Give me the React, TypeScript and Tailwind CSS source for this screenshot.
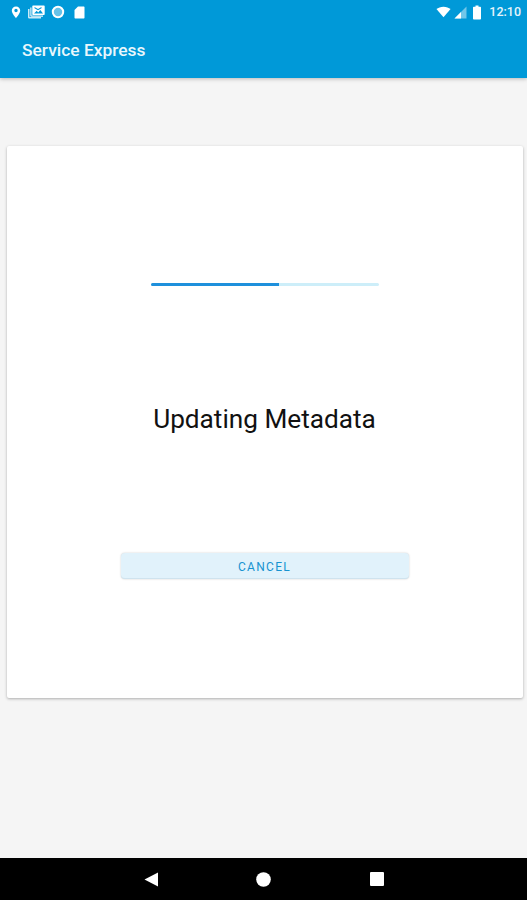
export default function App() {
  return (
    <div className="w-[527px] h-[900px] flex flex-col bg-[#f5f5f5] overflow-hidden font-['Roboto',sans-serif]">
      <div className="h-[78px] shrink-0 bg-[#0099d8] shadow-[0_1px_4px_rgba(0,0,0,0.25)] flex flex-col z-10">
        <div className="h-[24px] flex items-center justify-between pl-[11px] pr-[6px] text-white">
          <div className="flex items-center">
            <svg width="10" height="13" viewBox="0 0 10 13" fill="white"><path fillRule="evenodd" d="M5 .5C2.500.5.800 2.300.800 4.600.800 7.500 5 12.200 5 12.200s4.200-4.700 4.200-7.600C9.200 2.300 7.500.5 5 .5zM5 6.200a1.700 1.700 0 1 1 0-3.400 1.700 1.700 0 0 1 0 3.400z" /></svg>
            <svg className="ml-[7px]" width="17" height="14" viewBox="0 0 17 14" fill="white"><path d="M0 4h1.500v8H13v1.500H1.300A1.300 1.300 0 0 1 0 12.200z" fillOpacity="0.8" /><path d="M2.300 2.500h1.200v8H15v1.200H3.500a1.200 1.200 0 0 1-1.200-1.200z" fillOpacity="0.9" /><path fillRule="evenodd" d="M5.300.5h10.400c.6 0 1 .4 1 1v7.500c0 .6-.4 1-1 1H5.300c-.6 0-1-.4-1-1V1.500c0-.6.4-1 1-1zM6 8.500h9l-2.700-3.600-2.100 2.600-1.500-1.700zM6.500 2v1.200l3.500 2 3.500-2V2l-3.500 2z" /></svg>
            <svg className="ml-[6px]" width="14" height="14" viewBox="0 0 14 14"><circle cx="7" cy="7" r="5.200" fill="#66c2e8" stroke="white" strokeWidth="2" /></svg>
            <svg className="ml-[9px]" width="11" height="13" viewBox="0 0 11 13" fill="white"><path d="M4 .5h5.500c.6 0 1 .4 1 1v10c0 .6-.4 1-1 1h-8c-.6 0-1-.4-1-1V4z" /></svg>
          </div>
          <div className="flex items-center">
            <svg width="15" height="12" viewBox="0 0 17 13" fill="white"><path d="M.5 3.200C2.500 1.500 5.300.5 8.500.5s6 1 8 2.700L8.500 12.500z" /></svg>
            <svg className="ml-[3px]" width="13" height="13" viewBox="0 0 13 13"><path d="M.5 12.500 12.500.5v12z" fill="white" fillOpacity="0.45" /><path d="M.5 12.500 7 6v6.500z" fill="white" /></svg>
            <svg className="ml-[5px]" width="10" height="15" viewBox="0 0 9 15" fill="white"><path d="M3 .5h3v1.300h1.700c.5 0 .8.300.8.800v11.100c0 .5-.3.800-.8.800H1.300c-.5 0-.8-.3-.8-.8V2.600c0-.5.300-.8.800-.8H3z" /></svg>
            <span className="ml-[7px] text-[12.500px] leading-none font-medium text-[#e4f4fb]">12:10</span>
          </div>
        </div>
        <div className="h-[54px] flex items-center pl-[22px]">
          <span className="text-[17.400px] font-medium text-[#eaf7fc] leading-none">Service Express</span>
        </div>
      </div>
      <div className="flex-1 pt-[68px] pb-[160px] pl-[7px] pr-[4px]">
        <div className="h-[552px] bg-white rounded-[2px] shadow-[0_1px_3px_rgba(0,0,0,0.3)] flex flex-col items-center">
          <div className="mt-[137px] mr-[1px] w-[228px] h-[3px] bg-[#cdeef9] rounded-full overflow-hidden">
            <div className="w-[128px] h-full bg-[#1e90dc]" />
          </div>
          <div className="mt-[118px] mr-[1px] text-[26.200px] leading-[30px] text-[#111111]">Updating Metadata</div>
          <div className="mt-[119px] mr-[1px] w-[288px] h-[26px] rounded-[4px] bg-[#e1f2fb] border-b border-[#cfe3ee] shadow-[0_0_2px_rgba(0,0,0,0.22)] flex items-center justify-center">
            <span className="text-[12px] pt-[2px] font-normal tracking-[1.300px] text-[#1793d0] leading-none">CANCEL</span>
          </div>
        </div>
      </div>
      <div className="h-[42px] shrink-0 bg-black flex items-center justify-center">
        <div className="w-[240px] flex items-center justify-between">
          <svg width="14" height="15" viewBox="0 0 14 15" fill="white"><path d="M14 .5v14L.5 7.500z" /></svg>
          <svg width="15" height="15" viewBox="0 0 15 15" fill="white"><circle cx="7.500" cy="7.500" r="7.300" /></svg>
          <div className="w-[14px] h-[14px] bg-white rounded-[1px]" />
        </div>
      </div>
    </div>
  );
}
